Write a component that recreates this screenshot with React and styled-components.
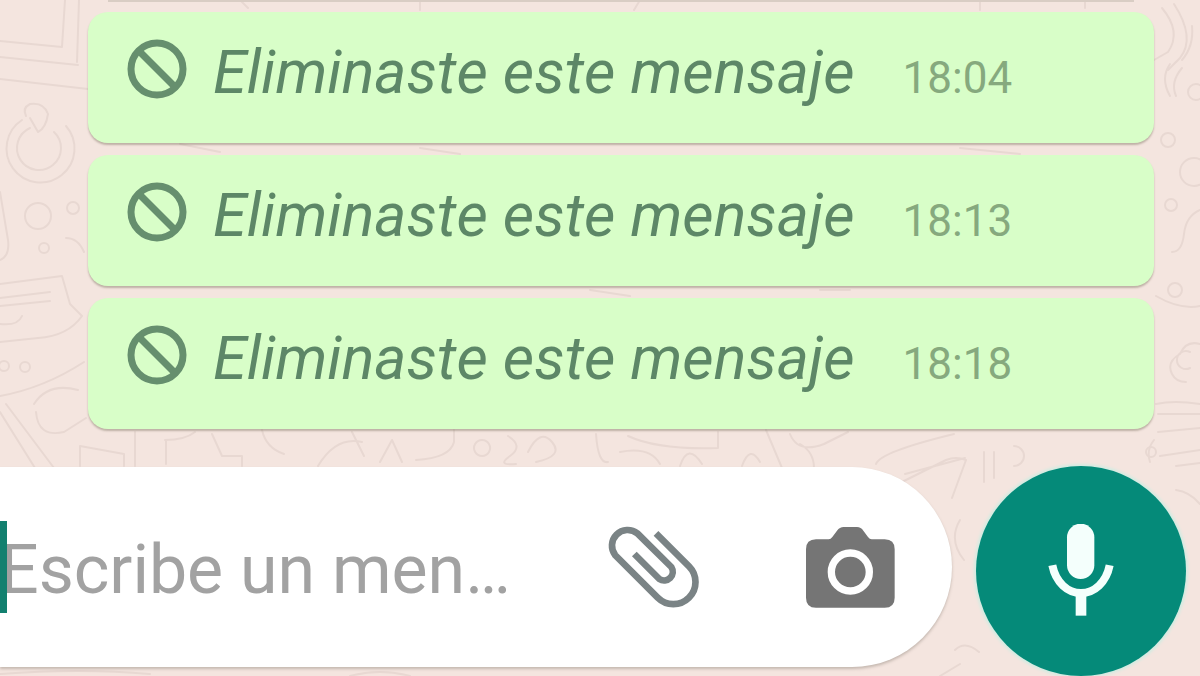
import React from 'react'
import styled, { createGlobalStyle } from 'styled-components';

const GlobalStyle = createGlobalStyle`
  * {
    box-sizing: border-box;
  }
  body {
    margin: 0;
    background: #f4e5df;
    font-family: Roboto, "Liberation Sans", sans-serif;
  }
`

const Screen = styled.main`
  position: relative;
  min-height: 100vh;
  overflow: hidden;
  display: flex;
  flex-direction: column;
  justify-content: space-between;
`
const Wallpaper = styled.svg`
  position: absolute;
  inset: 0;
  width: 100%;
  height: 100%;
  fill: none;
  stroke: #e8d8d2;
  stroke-width: 2;
  stroke-linecap: round;
  stroke-linejoin: round;
`
const Messages = styled.ul`
  position: relative;
  list-style: none;
  margin: 0;
  padding: 0 46px 36px 88px;
  display: flex;
  flex-direction: column;
  gap: 12px;

  /* lower edge of the message scrolled out above */
  &::before {
    content: '';
    height: 2px;
    margin: 0 20px -2px;
    background: #d9cdc4;
  }
`
const Bubble = styled.li`
  display: flex;
  align-items: baseline;
  padding: 27px 40px 35px 39px;
  background: #d8fec8;
  border-radius: 20px;
  box-shadow: 0 2px 2px rgba(110, 100, 80, 0.4);
`
const Blocked = styled.svg`
  align-self: flex-start;
  flex: none;
  width: 60px;
  height: 60px;
  margin-right: 26px;
  fill: none;
  stroke: #668f6e;
  stroke-width: 7;
`
const Deleted = styled.em`
  font-size: 61px;
  line-height: 66px;
  color: #5d8767;
  white-space: nowrap;
`
const Time = styled.time`
  margin-left: 48px;
  font-size: 44px;
  line-height: 60px;
  color: #86a97e;
`

const Composer = styled.form`
  position: relative;
  display: flex;
  align-items: flex-start;
  gap: 24px;
  padding-right: 14px;
`
const Field = styled.div`
  flex: 1;
  min-width: 0;
  height: 200px;
  margin-top: 1px;
  padding-right: 56px;
  display: flex;
  align-items: center;
  background: #fff;
  border-radius: 0 100px 100px 0;
  box-shadow: 0 2px 3px rgba(110, 100, 90, 0.35);
`
const Caret = styled.span`
  position: absolute;
  left: 0;
  width: 7px;
  height: 92px;
  background: #12806f;
`
const TextBox = styled.input`
  flex: 1;
  min-width: 0;
  height: 92px;
  padding: 6px 0 0;
  border: 0;
  outline: 0;
  background: transparent;
  font-family: inherit;
  font-size: 68px;
  color: #333;
  caret-color: #12806f;

  &::placeholder {
    color: #a2a2a2;
    opacity: 1;
  }
`
const IconButton = styled.button`
  flex: none;
  display: flex;
  margin-left: ${props => props.$gap || 0}px;
  padding: 0;
  border: 0;
  background: none;
  color: #757575;
`
const MicButton = styled.button`
  flex: none;
  display: flex;
  align-items: center;
  justify-content: center;
  width: 210px;
  height: 210px;
  padding: 0;
  border: 0;
  border-radius: 50%;
  background: #058a79;
  box-shadow: 0 0 3px 2px #d0ece2;
`

const messages = ['18:04', '18:13', '18:18']

const Doodles = () => (
  <Wallpaper viewBox="0 0 1200 676" preserveAspectRatio="xMidYMid slice" aria-hidden="true">
    {/* left side */}
    <path d="M0 41L62 47L65 0M0 57L78 65M0 79L88 89M77 62L79 0" />
    <path d="M22 120a34 34 0 1 0 44 6M30 128a22 22 0 1 0 24 4M26 116q-4-8 4-12q14-2 18 10q-2 14-10 18l-8-14" />
    <circle cx="38" cy="216" r="13" />
    <circle cx="73" cy="208" r="6" />
    <circle cx="44" cy="248" r="5" />
    <path d="M0 192l8 48q2 16-8 20M66 238q12 0 18 14" />
    <path d="M0 284l62-8l8 28l12 12q-14 20-44 22l-38 4M0 298l50-6M0 306l50-5M0 324q18 2 22-8" />
    <circle cx="4" cy="366" r="5" />
    <circle cx="25" cy="367" r="5" />
    <path d="M0 396q44-8 84-34M6 404l54 72M0 412l40 64M34 404q14-22 44-14M36 412q2 26 28 20l22-14" />
    {/* strip over the text field */}
    <path d="M80 466v-20l44 8v12M135 432v34M165 440q20 0 30-8M166 440v24M212 434l10 22h20v10M262 430q4 18 22 24M318 466q18-30 44-24M352 432l12 24" />
    <path d="M380 462l12-22l10 22M416 460q34-2 38-18v-12M482 440a8 8 0 1 0 .1 0M508 436q16 10 2 20t6 8M528 452q12-24 24-10t-16 20M596 434q2 30 12 28" />
    <path d="M620 452q30-6 40 12M628 436q30 14 90 12v-16M680 466q8-24 22-2M742 466q8-22 18-4M766 430l16 38M790 434q8 20 34 10l24-12M800 444q14 8 14 24" />
    <path d="M876 464q4-12 78-30M890 488l56-28q10-4 20 0l-14 38M905 474l60-16M984 452v30M994 452v26M1014 446a9 9 0 0 1 0 20" />
    {/* right side */}
    <path d="M1162 8q20 24 6 44l-14 8M1174 4q22 34 6 54l-12 12M1192 26q2 20-10 34M1170 64q-10 14 0 32M1182 68q-12 14-6 28" />
    <circle cx="1196" cy="92" r="8" />
    <circle cx="1168" cy="140" r="7" />
    <circle cx="1194" cy="172" r="14" />
    <circle cx="1171" cy="205" r="6" />
    <circle cx="1175" cy="290" r="7" />
    <path d="M1200 210q-14 6-16 24t-12 18M1156 296q24 14 44 10M1200 344q-14-4-20 10q-14 8-8 20q4 8 14 8M1190 352a9 9 0 1 0 .1 16" />
    <path d="M1156 404q18-4 44 0M1158 414h42M1158 432l42-4M1154 440q-8 10-4 22M1160 456l40-6M1176 466l24-3" />
    <circle cx="1151" cy="452" r="5" />
    {/* between and below the panels */}
    <path d="M240 0l8 8M420 0v10M640 0l-6 10M980 0v10M1085 0v8M180 144l40 8M420 148l40 6M590 290l40 6M820 290h30M960 148l60 6" />
    <path d="M0 674q80-6 150 0M350 676q30-8 60 0M960 520q-12 20 4 40M955 650q10-10 24 2M1176 490q14 2 24 14M940 676l20-12" />
  </Wallpaper>
)

export default function App() {
  return (
    <>
      <GlobalStyle />
      <Screen>
        <Doodles />
        <Messages>
          {messages.map(time => (
            <Bubble key={time}>
              <Blocked viewBox="0 0 60 60" aria-hidden="true">
                <circle cx="30" cy="30" r="26" />
                <path d="M12 12L48 48" />
              </Blocked>
              <Deleted>Eliminaste este mensaje</Deleted>
              <Time>{time}</Time>
            </Bubble>
          ))}
        </Messages>
        <Composer onSubmit={e => e.preventDefault()}>
          <Field>
            <Caret />
            <TextBox type="text" aria-label="Mensaje" placeholder="Escribe un men…" />
            <IconButton type="button" aria-label="Adjuntar">
              <svg width="94" height="86" viewBox="86 106 282 258" fill="none" stroke="#7a8385" strokeWidth="20">
                <path d="M230 134L329 233A66 66 0 0 1 235 327L108 200A47 47 0 0 1 174 134L276 235A26 26 0 0 1 240 271L165 196" />
              </svg>
            </IconButton>
            <IconButton type="button" aria-label="Cámara" $gap={104}>
              <svg width="90" height="86" viewBox="678 106 270 258" fill="currentColor">
                <path d="M708 152H746Q752 152 757 145L771 126Q779 115 791 115H831Q843 115 850 126L864 145Q869 152 875 152H914Q944 152 944 182V327Q944 357 914 357H708Q678 357 678 327V182Q678 152 708 152Z" />
                <circle cx="811" cy="250" r="57" fill="none" stroke="#fff" strokeWidth="22" />
              </svg>
            </IconButton>
          </Field>
          <MicButton type="button" aria-label="Grabar mensaje de voz">
            <svg width="70" height="94" viewBox="257 223 210 282" fill="none" stroke="#f4fffc" strokeWidth="24">
              <rect x="320" y="222" width="82" height="166" rx="41" fill="#f4fffc" stroke="none" />
              <path d="M276 347C286 398 322 430 362 430S438 398 448 347" />
              <path d="M362 430V498" strokeWidth="32" />
            </svg>
          </MicButton>
        </Composer>
      </Screen>
    </>
  )
}
